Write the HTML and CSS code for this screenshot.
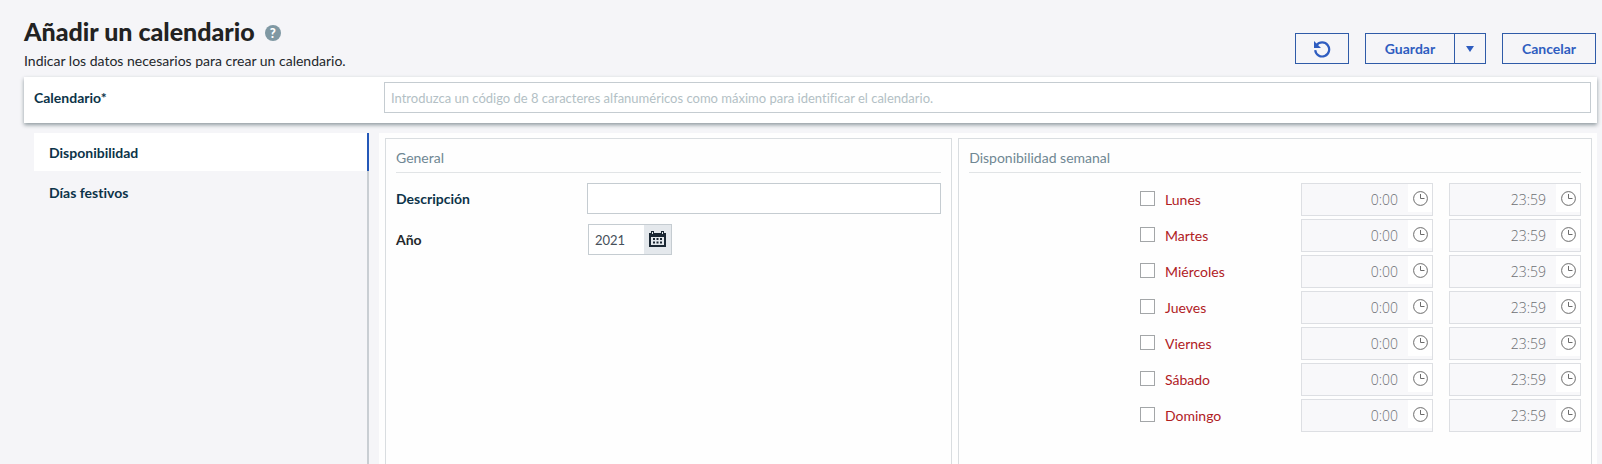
FILE: index.html
```html
<!DOCTYPE html>
<html lang="es">

<head>
    <meta charset="UTF-8">
    <meta name="viewport" content="width=device-width, initial-scale=1.0">
    <title>Añadir un calendario</title>
    <link rel="stylesheet" href="styles.css">
</head>

<body>
    <!-- Shared icons -->
    <svg class="sprite" aria-hidden="true">
        <symbol id="clock" viewBox="0 0 15 15">
            <circle cx="7.5" cy="7.5" r="6.9" fill="none" stroke="currentColor" />
            <path d="M7.5 3V7.5H11.5" fill="none" stroke="currentColor" />
        </symbol>
    </svg>

    <!-- Header -->
    <header class="header">
        <div>
            <div class="title-row">
                <h1>Añadir un calendario</h1>
                <a class="help" href="#" aria-label="Ayuda">?</a>
            </div>
            <p class="subtitle">Indicar los datos necesarios para crear un calendario.</p>
        </div>
        <div class="actions">
            <button class="btn btn-reset" type="button" aria-label="Restablecer">
                <svg width="18" height="18" viewBox="0 0 18 18" aria-hidden="true">
                    <path d="M3.6 5.2A7 7 0 1 1 2.2 10.2" fill="none" stroke="currentColor" stroke-width="2.2" />
                    <path d="M1 1V8H8Z" fill="currentColor" />
                </svg>
            </button>
            <div class="split">
                <button class="btn btn-save" type="button">Guardar</button>
                <button class="btn btn-more" type="button" aria-label="Más opciones">
                    <svg width="8" height="6" viewBox="0 0 8 6" aria-hidden="true">
                        <path d="M0 0H8L4 6Z" fill="currentColor" />
                    </svg>
                </button>
            </div>
            <button class="btn btn-cancel" type="button">Cancelar</button>
        </div>
    </header>

    <!-- Calendar code -->
    <div class="code-bar">
        <label for="code">Calendario*</label>
        <input class="field" id="code" type="text" maxlength="8"
            placeholder="Introduzca un código de 8 caracteres alfanuméricos como máximo para identificar el calendario.">
    </div>

    <div class="layout">
        <!-- Side tabs -->
        <nav class="tabs">
            <a class="tab active" href="#disponibilidad">Disponibilidad</a>
            <a class="tab" href="#festivos">Días festivos</a>
        </nav>

        <main class="content" id="disponibilidad">
            <section class="panel">
                <h2>General</h2>
                <div class="row">
                    <label for="desc">Descripción</label>
                    <input class="field" id="desc" type="text">
                </div>
                <div class="row">
                    <label class="dark" for="year">Año</label>
                    <div class="year">
                        <input id="year" type="text" value="2021">
                        <button type="button" aria-label="Elegir año">
                            <svg width="17" height="17" viewBox="0 0 17 17" aria-hidden="true">
                                <path d="M0 2H2V0H5V2H12V0H15V2H17V16H0Z" fill="#1b2733" />
                                <path d="M2 6H15V14H2Z" fill="#e4e8ec" />
                                <path d="M3.5 1V3M13.5 1V3" stroke="#e4e8ec" />
                                <path d="M4 7H6V9H4ZM7.5 7H9.5V9H7.5ZM11 7H13V9H11ZM4 10.5H6V12.5H4ZM7.5 10.5H9.5V12.5H7.5ZM11 10.5H13V12.5H11Z" fill="#1b2733" />
                            </svg>
                        </button>
                    </div>
                </div>
            </section>

            <section class="panel">
                <h2>Disponibilidad semanal</h2>
                <div class="week">
                    <div class="day">
                        <label><input type="checkbox">Lunes</label>
                        <div class="time"><input type="text" value="0:00" aria-label="Lunes desde" disabled><span><svg><use href="#clock" /></svg></span></div>
                        <div class="time"><input type="text" value="23:59" aria-label="Lunes hasta" disabled><span><svg><use href="#clock" /></svg></span></div>
                    </div>
                    <div class="day">
                        <label><input type="checkbox">Martes</label>
                        <div class="time"><input type="text" value="0:00" aria-label="Martes desde" disabled><span><svg><use href="#clock" /></svg></span></div>
                        <div class="time"><input type="text" value="23:59" aria-label="Martes hasta" disabled><span><svg><use href="#clock" /></svg></span></div>
                    </div>
                    <div class="day">
                        <label><input type="checkbox">Miércoles</label>
                        <div class="time"><input type="text" value="0:00" aria-label="Miércoles desde" disabled><span><svg><use href="#clock" /></svg></span></div>
                        <div class="time"><input type="text" value="23:59" aria-label="Miércoles hasta" disabled><span><svg><use href="#clock" /></svg></span></div>
                    </div>
                    <div class="day">
                        <label><input type="checkbox">Jueves</label>
                        <div class="time"><input type="text" value="0:00" aria-label="Jueves desde" disabled><span><svg><use href="#clock" /></svg></span></div>
                        <div class="time"><input type="text" value="23:59" aria-label="Jueves hasta" disabled><span><svg><use href="#clock" /></svg></span></div>
                    </div>
                    <div class="day">
                        <label><input type="checkbox">Viernes</label>
                        <div class="time"><input type="text" value="0:00" aria-label="Viernes desde" disabled><span><svg><use href="#clock" /></svg></span></div>
                        <div class="time"><input type="text" value="23:59" aria-label="Viernes hasta" disabled><span><svg><use href="#clock" /></svg></span></div>
                    </div>
                    <div class="day">
                        <label><input type="checkbox">Sábado</label>
                        <div class="time"><input type="text" value="0:00" aria-label="Sábado desde" disabled><span><svg><use href="#clock" /></svg></span></div>
                        <div class="time"><input type="text" value="23:59" aria-label="Sábado hasta" disabled><span><svg><use href="#clock" /></svg></span></div>
                    </div>
                    <div class="day">
                        <label><input type="checkbox">Domingo</label>
                        <div class="time"><input type="text" value="0:00" aria-label="Domingo desde" disabled><span><svg><use href="#clock" /></svg></span></div>
                        <div class="time"><input type="text" value="23:59" aria-label="Domingo hasta" disabled><span><svg><use href="#clock" /></svg></span></div>
                    </div>
                </div>
            </section>
        </main>
    </div>
</body>

</html>
```
FILE: styles.css
```css
* {
    margin: 0;
    padding: 0;
    box-sizing: border-box;
}

body {
    min-height: 100vh;
    padding: 15px 5px 0 24px;
    display: flex;
    flex-direction: column;
    background-color: #f5f5f8;
    color: #23272b;
    font-family: Lato, "Liberation Sans", sans-serif;
    font-size: 14px;
    font-variant-ligatures: none;
    line-height: 20px;
}

input,
button {
    font: inherit;
    color: inherit;
    border-radius: 0;
}

.sprite {
    display: none;
}

/* Header */
.header {
    display: flex;
    justify-content: space-between;
    height: 62px;
}

.title-row {
    display: flex;
    align-items: center;
    gap: 10px;
}

h1 {
    color: #222;
    font-size: 25px;
    line-height: 32px;
    font-weight: 900;
}

.help {
    width: 16px;
    height: 16px;
    margin-top: 4px;
    border-radius: 50%;
    background-color: #7f98a3;
    color: white;
    font-size: 13px;
    font-weight: 900;
    line-height: 16px;
    text-align: center;
    text-decoration: none;
}

.subtitle {
    margin-top: 4px;
}

.actions {
    display: flex;
    align-items: flex-start;
    gap: 16px;
    padding: 18px 1px 0 0;
}

.btn {
    height: 31px;
    display: flex;
    align-items: center;
    justify-content: center;
    border: 1px solid #2f5ba8;
    background-color: transparent;
    color: #2f5dc0;
    font-weight: 700;
}

.btn-reset {
    width: 54px;
}

.split {
    display: flex;
}

.btn-save {
    width: 90px;
}

.btn-more {
    width: 32px;
    margin-left: -1px;
}

.btn-cancel {
    width: 94px;
}

/* Calendar code bar */
.code-bar {
    display: grid;
    grid-template-columns: 350px 1fr;
    align-items: center;
    padding: 5px 6px 10px 10px;
    background-color: white;
    box-shadow: 0 2px 4px #8f9a9f;
}

label {
    padding-top: 1px;
    color: #0c3349;
    font-weight: 700;
}

.field {
    width: 100%;
    height: 31px;
    padding: 0 6px;
    border: 1px solid #c5ccd1;
    background-color: white;
    font-size: 13px;
}

.field::placeholder {
    color: #b3bfc5;
}

/* Tabs and content */
.layout {
    flex: 1;
    display: grid;
    grid-template-columns: 335px 1fr;
    gap: 10px;
    margin-top: 10px;
    padding-left: 10px;
}

.tabs {
    display: flex;
    flex-direction: column;
    gap: 2px;
    box-shadow: inset -2px 0 #c9ced3;
}

.tab {
    padding: 10px 15px 8px;
    color: #0c3349;
    font-weight: 700;
    text-decoration: none;
}

.tab.active {
    background-color: white;
    border-right: 2px solid #2458b8;
}

.content {
    display: grid;
    grid-template-columns: 17fr 19fr;
    gap: 6px;
    padding: 5px 5px 0 6px;
    background-color: #fefefe;
}

.panel {
    padding: 9px 10px 0;
    border: 1px solid #d9dde0;
    border-bottom: none;
}

h2 {
    margin-bottom: 10px;
    padding-bottom: 4px;
    border-bottom: 1px solid #e1e4e6;
    color: #6f8793;
    font-size: 14px;
    font-weight: 400;
}

.row {
    display: grid;
    grid-template-columns: 191px 1fr;
    align-items: center;
    margin-bottom: 10px;
}

.dark {
    color: #23272b;
}

.year {
    display: flex;
    width: 84px;
    height: 31px;
    margin-left: 1px;
    border: 1px solid #c5ccd1;
}

.year input {
    width: 55px;
    padding-left: 6px;
    border: none;
    color: #46505a;
    font-size: 13px;
}

.year button {
    flex: 1;
    display: flex;
    align-items: center;
    justify-content: center;
    border: none;
    background-color: #e4e8ec;
}

/* Weekly availability */
.week {
    display: grid;
    gap: 3px;
}

.day {
    display: grid;
    grid-template-columns: 145px 132px 132px;
    justify-content: end;
    gap: 16px;
}

.day label {
    display: flex;
    align-items: center;
    gap: 10px;
    color: #b0201f;
    font-weight: 400;
}

.day input[type="checkbox"] {
    appearance: none;
    width: 15px;
    height: 15px;
    margin-bottom: 3px;
    border: 1px solid #a3a6a8;
    background-color: white;
}

.time {
    display: flex;
    height: 33px;
    border: 1px solid #dddfe3;
    background-color: #f8f8fa;
}

.time input {
    flex: 1;
    min-width: 0;
    padding: 1px 10px 0 0;
    border: none;
    background-color: transparent;
    color: #6c6f73;
    font-family: "Open Sans", "Noto Sans", sans-serif;
    font-weight: 300;
    text-align: right;
}

.time span {
    width: 24px;
    height: 28px;
    padding-left: 2px;
    display: flex;
    align-items: center;
    justify-content: center;
    background-color: white;
}

.time svg {
    width: 15px;
    height: 15px;
    color: #6c6c6c;
}
```
